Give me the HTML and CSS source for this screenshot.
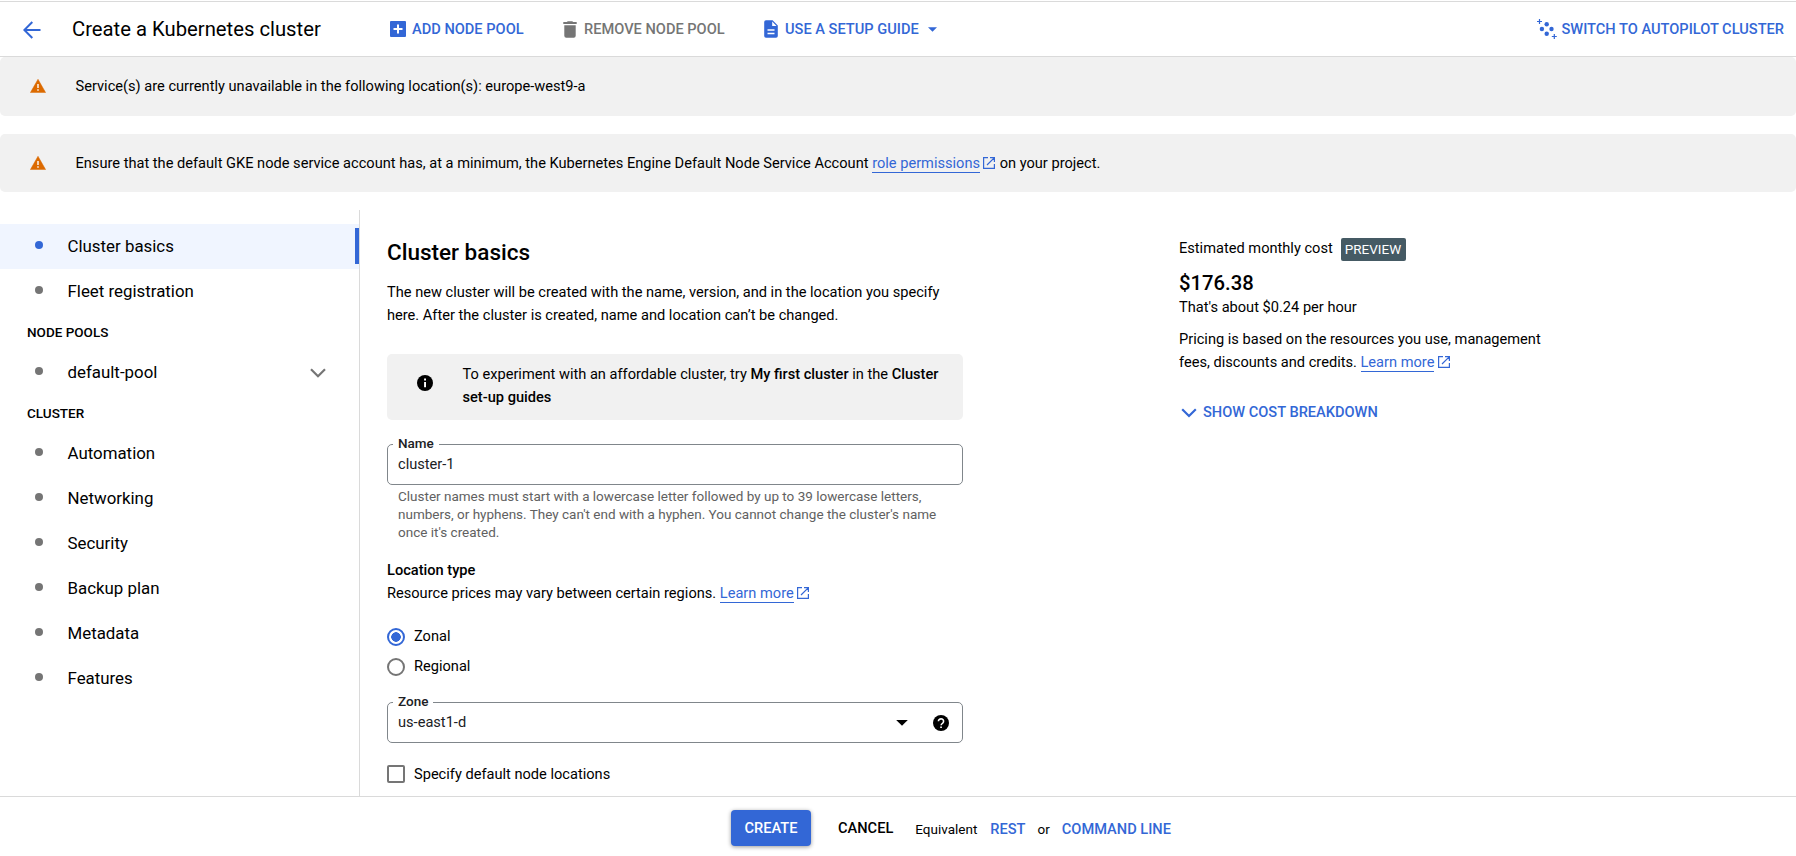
FILE: index.html
```
<!DOCTYPE html>
<html lang="en">
<head>
<meta charset="utf-8">
<title>Create a Kubernetes cluster</title>
<link rel="stylesheet" href="styles.css">
</head>
<body>
<svg class="defs" width="0" height="0">
  <symbol id="ext" viewBox="0 0 12 12"><path d="M5 .6H.6v10.8h10.8V7M7 .6h4.4V5M11.2.8 4 8" fill="none" stroke="currentColor" stroke-width="1.2"/></symbol>
  <symbol id="warn" viewBox="0 0 16 14"><path d="M8 .3 15.6 13.6H.4z" fill="#dc6a00" stroke="#dc6a00" stroke-width=".5" stroke-linejoin="round"/><path d="M7.3 5h1.4v4H7.3zM7.3 10.2h1.4v1.5H7.3z" fill="#fff"/></symbol>
</svg>
<header class="bar">
  <svg class="back" width="18" height="18" viewBox="0 0 18 18"><path d="M17.5 9H1.5M9.3 1 1.3 9l8 8" fill="none" stroke="currentColor" stroke-width="2"/></svg>
  <h1 class="title">Create a Kubernetes cluster</h1>
  <div class="action add">
    <svg width="16" height="16" viewBox="0 0 16 16"><rect width="16" height="16" rx="1" fill="currentColor"/><path d="M8 3.5v9M3.5 8h9" stroke="#fff" stroke-width="2"/></svg>
    <span>ADD NODE POOL</span>
  </div>
  <div class="action remove">
    <svg width="14" height="17" viewBox="0 0 14 17"><path d="M.3 1.1h3.5L4.8.2h4.4l1 .9h3.5v2H.3zM1.3 4.3h11.4v10.4a2 2 0 0 1-2 2H3.3a2 2 0 0 1-2-2z" fill="currentColor"/></svg>
    <span>REMOVE NODE POOL</span>
  </div>
  <div class="action guide">
    <svg width="14" height="18" viewBox="0 0 14 18"><path d="M2 .3h6.6L13.8 5.5v10.4a1.8 1.8 0 0 1-1.8 1.8H2A1.8 1.8 0 0 1 .2 15.9V2.1A1.8 1.8 0 0 1 2 .3z" fill="currentColor"/><path d="M8.2 1.6v4.3h4.3z" fill="#fff"/><path d="M3.5 10h7M3.5 13.5h7" stroke="#fff" stroke-width="1.5"/></svg>
    <span>USE A SETUP GUIDE</span>
    <svg class="drop" width="9" height="5" viewBox="0 0 9 5"><path d="M0 .2h9L4.5 4.7z" fill="currentColor"/></svg>
  </div>
  <div class="action switch">
    <svg width="20" height="20" viewBox="0 0 20 20"><g fill="currentColor"><circle cx="9.7" cy="5.2" r="2.2"/><circle cx="4.9" cy="10" r="2.2"/><circle cx="14.5" cy="10" r="2.2"/><circle cx="9.7" cy="14.8" r="2.2"/></g><path d="M2.5 0v5M0 2.5h5M17.3 15v5M14.8 17.5h5" stroke="currentColor" stroke-width="1.2"/></svg>
    <span>SWITCH TO AUTOPILOT CLUSTER</span>
  </div>
</header>
<section class="banner first"><svg width="16" height="14"><use href="#warn"/></svg><p>Service(s) are currently unavailable in the following location(s): europe-west9-a</p></section>
<section class="banner"><svg width="16" height="14"><use href="#warn"/></svg><p>Ensure that the default GKE node service account has, at a minimum, the Kubernetes Engine Default Node Service Account <a class="link">role permissions</a><svg class="ext" width="12" height="12"><use href="#ext"/></svg> on your project.</p></section>
<div class="body">
  <nav class="side">
    <div class="item active"><i class="dot"></i>Cluster basics</div>
    <div class="item"><i class="dot"></i>Fleet registration</div>
    <div class="group">NODE POOLS</div>
    <div class="item"><i class="dot"></i>default-pool<svg class="expand" width="16" height="10" viewBox="0 0 16 10"><path d="M1 1.2l7 7 7-7" fill="none" stroke="currentColor" stroke-width="2.2"/></svg></div>
    <div class="group">CLUSTER</div>
    <div class="item"><i class="dot"></i>Automation</div>
    <div class="item"><i class="dot"></i>Networking</div>
    <div class="item"><i class="dot"></i>Security</div>
    <div class="item"><i class="dot"></i>Backup plan</div>
    <div class="item"><i class="dot"></i>Metadata</div>
    <div class="item"><i class="dot"></i>Features</div>
  </nav>
  <main class="form">
    <h2 class="heading">Cluster basics</h2>
    <p class="intro">The new cluster will be created with the name, version, and in the location you specify<br>here. After the cluster is created, name and location can’t be changed.</p>
    <div class="note">
      <svg width="16" height="16" viewBox="0 0 16 16"><circle cx="8" cy="8" r="8"/><path d="M7.1 3.6h1.9v1.9H7.1zM7.1 6.9h1.9v5.3H7.1z" fill="#fff"/></svg>
      <p>To experiment with an affordable cluster, try <b>My first cluster</b> in the <b>Cluster<br>set-up guides</b></p>
    </div>
    <div class="field name"><label class="label">Name</label><span class="value">cluster-1</span></div>
    <p class="hint">Cluster names must start with a lowercase letter followed by up to 39 lowercase letters,<br>numbers, or hyphens. They can't end with a hyphen. You cannot change the cluster's name<br>once it's created.</p>
    <p class="location"><b>Location type</b><br>Resource prices may vary between certain regions. <a class="link">Learn more</a><svg class="ext" width="12" height="12"><use href="#ext"/></svg></p>
    <div class="option"><i class="radio on"></i><span>Zonal</span></div>
    <div class="option"><i class="radio"></i><span>Regional</span></div>
    <div class="field zone"><label class="label">Zone</label><span class="value">us-east1-d</span>
      <svg class="caret" width="12" height="6" viewBox="0 0 12 6"><path d="M.2 0h11.6L6 5.8z"/></svg>
      <svg class="help" width="16" height="16" viewBox="0 0 16 16"><circle cx="8" cy="8" r="8"/><path d="M5.4 6.3a2.6 2.4 0 1 1 4.3 1.8Q8.1 9.2 8.1 10.3" fill="none" stroke="#fff" stroke-width="1.6"/><path d="M7.2 11.4h1.7v1.7H7.2z" fill="#fff"/></svg>
    </div>
    <div class="option check"><i class="box"></i><span>Specify default node locations</span></div>
  </main>
  <aside class="cost">
    <div class="estimate"><span class="caption">Estimated monthly cost</span><span class="badge">PREVIEW</span></div>
    <div class="price">$176.38</div>
    <div class="hourly">That's about $0.24 per hour</div>
    <p class="pricing">Pricing is based on the resources you use, management<br>fees, discounts and credits. <a class="link">Learn more</a><svg class="ext" width="12" height="12"><use href="#ext"/></svg></p>
    <div class="breakdown"><svg width="16" height="10" viewBox="0 0 16 10"><path d="M1.2 1.3 8 8l6.8-6.7" fill="none" stroke="currentColor" stroke-width="2.2"/></svg><span>SHOW COST BREAKDOWN</span></div>
  </aside>
</div>
<footer class="foot">
  <button class="create">CREATE</button>
  <span class="cancel">CANCEL</span>
  <div class="equiv"><span class="eq">Equivalent</span><span class="cmd rest">REST</span><span class="eq">or</span><span class="cmd line">COMMAND LINE</span></div>
</footer>
</body>
</html>
```
FILE: styles.css
```
* { box-sizing: border-box; margin: 0; padding: 0; }
body {
  width: 1796px; height: 856px; overflow: hidden;
  display: flex; flex-direction: column;
  background: #fff; color: #000;
  font: 14.625px/23px Roboto, sans-serif;
  white-space: nowrap;
}
.defs { position: absolute; }
svg { flex: none; }
b { font-weight: 500; }
.bar {
  height: 56px; margin-top: 1px; padding: 0 12px 0 23px; flex: none;
  display: flex; align-items: center;
  border-top: 1px solid #dadada; border-bottom: 1px solid #dadada;
}
.back { color: #3367d6; margin-top: 1px; }
.title { font-size: 20.25px; font-weight: 400; margin-left: 31px; width: 318px; }
.action { display: flex; align-items: center; color: #3367d6; font-weight: 500; }
.add { gap: 6px; width: 173px; }
.remove { gap: 7px; width: 201px; color: #757575; }
.guide { gap: 7px; }
.drop { margin-left: 2px; }
.switch { margin-left: auto; gap: 4px; }
.banner {
  height: 58px; flex: none; margin-bottom: 18px; padding-left: 30px;
  display: flex; align-items: center; gap: 29.5px;
  background: #f1f1f1; border-radius: 5px;
}
.banner.first { height: 59px; }
.banner.first svg { margin-bottom: 1px; }
.link { color: #3367d6; border-bottom: 1px solid #3367d6; }
.ext { color: #3367d6; margin: 0 1px 0 3px; vertical-align: -1px; }
.body { flex: 1; min-height: 0; display: flex; }
.side { width: 360px; flex: none; border-right: 1px solid #dadada; padding-top: 14px; }
.item { height: 45px; display: flex; align-items: center; padding-left: 35px; font-size: 16.875px; line-height: 22.5px; }
.dot { width: 8px; height: 8px; border-radius: 50%; background: #757575; margin: 0 24.5px 3px 0; }
.active { background: linear-gradient(#3367d6, #3367d6) right 4px / 4px 36px no-repeat #f0f5ff; }
.active .dot { background: #3367d6; }
.group { height: 36px; line-height: 36px; padding-left: 27px; font-size: 13.5px; font-weight: 500; }
.expand { color: #757575; margin-left: auto; margin-right: 33px; }
.form { width: 576px; margin-left: 27px; padding-top: 27px; flex: none; }
.heading { font-size: 22.5px; line-height: 30px; font-weight: 500; }
.intro { margin-top: 14px; }
.note {
  margin-top: 27px; height: 66px; padding: 0 0 2px 30px;
  display: flex; align-items: center; gap: 29.5px;
  background: #f1f1f1; border-radius: 5px;
}
.note svg { margin-bottom: 6px; }
.field {
  position: relative; height: 41px; padding: 0 13px 0 10px;
  display: flex; align-items: center;
  border: 1px solid #80868b; border-radius: 5px;
}
.name { margin-top: 24px; }
.zone { margin-top: 21px; }
.label {
  position: absolute; left: 5px; top: -11px; padding: 0 5px 0 5px;
  background: #fff; color: #202124; font-size: 13.5px; line-height: 18px; font-weight: 500;
}
.value { color: #202124; margin-bottom: 1px; line-height: 22.5px; }
.caret { margin-left: auto; margin-right: 25px; }
.hint { margin: 2px 0 0 11px; font-size: 13.5px; line-height: 18px; color: #616161; }
.location { margin: 18px 0 16px; }
.option { height: 30px; display: flex; align-items: center; gap: 9px; line-height: 22.5px; }
.radio { width: 18px; height: 18px; border: 2px solid #757575; border-radius: 50%; margin-top: 1px; }
.radio.on { border-color: #3367d6; background: radial-gradient(circle, #3367d6 4.5px, #fff 5px); }
.check { margin-top: 16px; }
.box { width: 18px; height: 18px; border: 2px solid #757575; border-radius: 2px; }
.cost { margin-left: 216px; padding-top: 27px; }
.estimate { display: flex; align-items: center; gap: 8px; height: 24px; }
.caption { margin-bottom: 2px; }
.badge { height: 23px; line-height: 23px; padding: 0 5px 0 4px; background: #455a64; color: #fff; border-radius: 2px; font-size: 13.5px; }
.price { margin-top: 10px; font-size: 20.25px; line-height: 24px; font-weight: 500; }
.hourly { margin-top: 1px; }
.pricing { margin-top: 9px; }
.pricing .ext { margin-left: 4px; }
.breakdown { display: flex; align-items: center; gap: 6px; margin-top: 27px; padding-left: 2px; color: #3367d6; font-weight: 500; }
.foot { height: 60px; flex: none; border-top: 1px solid #dadada; display: flex; padding: 13px 0 0 731px; }
.create {
  width: 80px; height: 36px; border: 0; border-radius: 4px; background: #3367d6; color: #fff;
  font: 500 14.625px/36px Roboto, sans-serif; box-shadow: 0 1px 4px rgba(0, 0, 0, .4);
}
.cancel { margin-left: 27px; line-height: 36px; font-weight: 500; }
.equiv { display: flex; align-items: baseline; margin-left: 22px; line-height: 39px; }
.eq { font-size: 13.5px; }
.cmd { color: #3367d6; font-weight: 500; margin-left: 13px; }
.rest { margin-right: 12px; }
.line { margin-left: 12px; }
```
